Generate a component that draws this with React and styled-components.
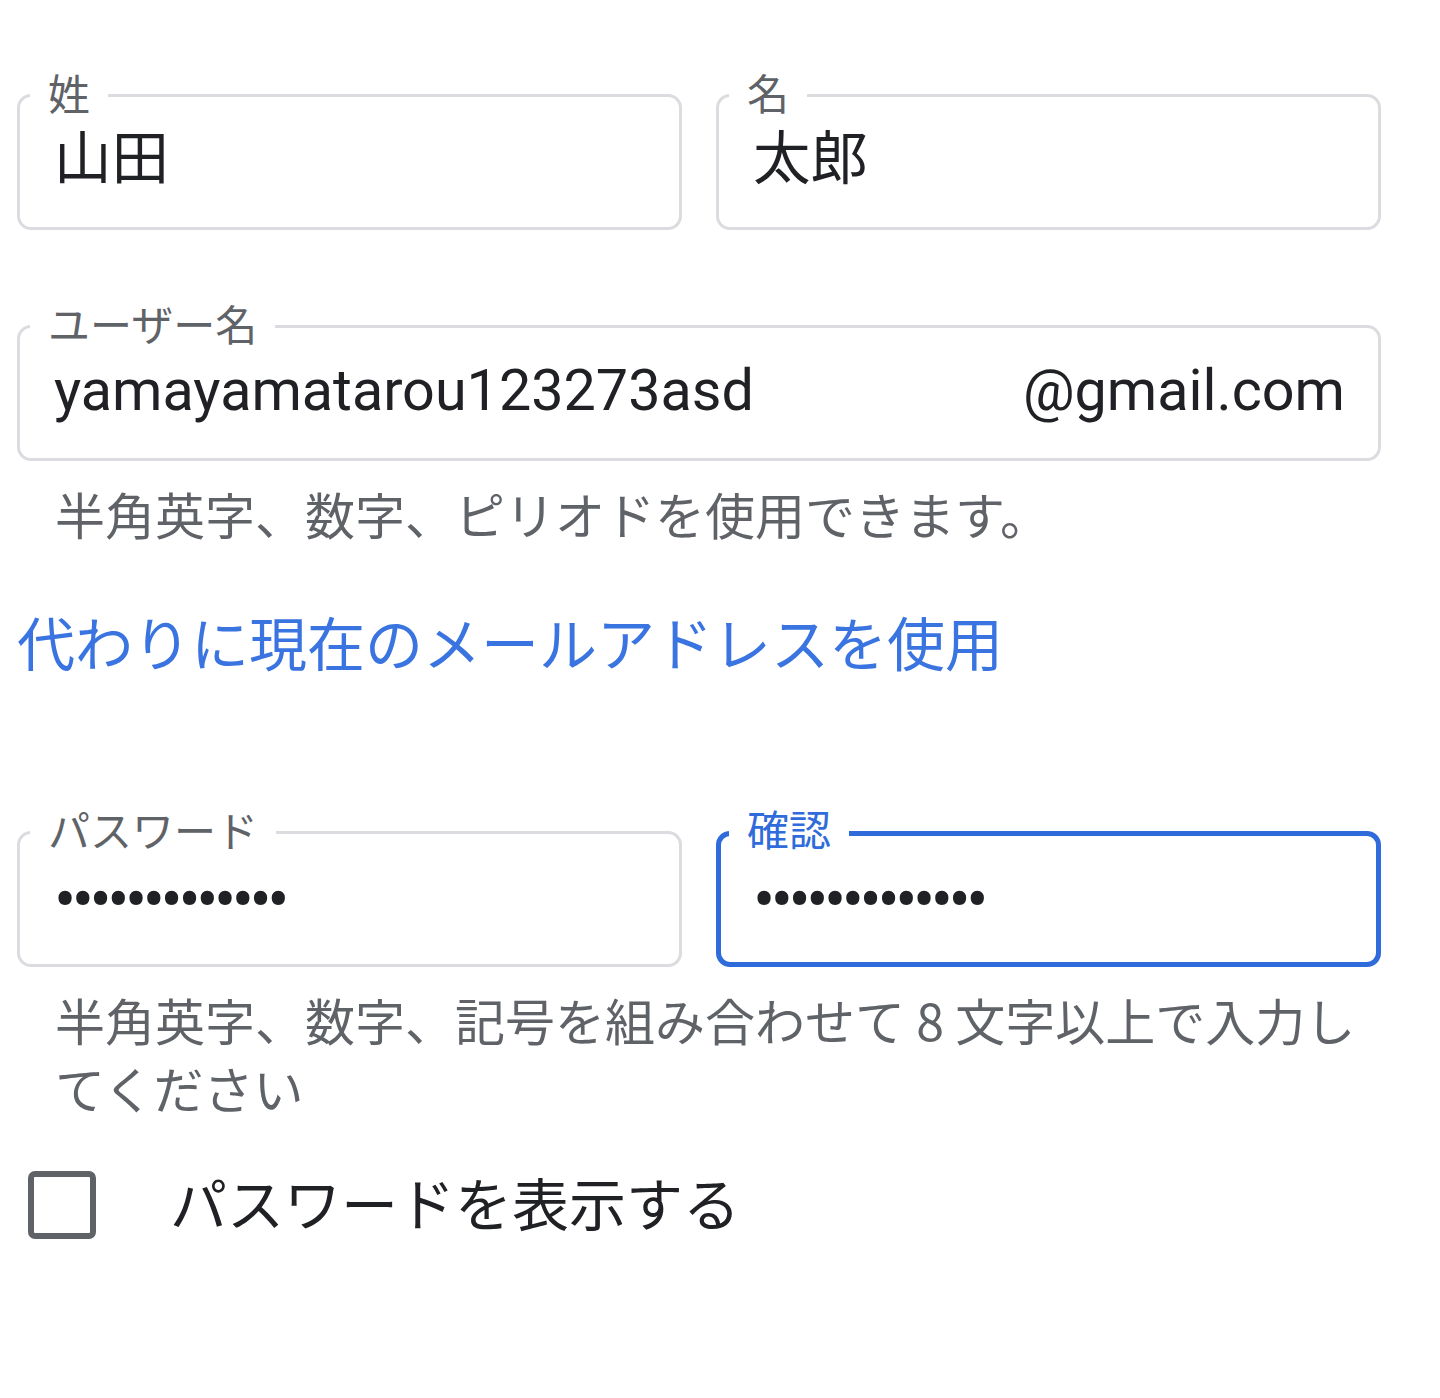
import React from "react";
import styled, { createGlobalStyle } from "styled-components";

const GlobalStyle = createGlobalStyle`
  html, body {
    margin: 0;
    padding: 0;
    background: #ffffff;
  }
  body {
    font-family: Roboto, "Noto Sans CJK JP", "Noto Sans", sans-serif;
    color: #202124;
  }
`;

const Page = styled.div`
  width: 1440px;
  height: 1398px;
  box-sizing: border-box;
  padding: 94px 59px 0 17px;
  display: flex;
  flex-direction: column;
`;

const Row = styled.div`
  display: grid;
  grid-template-columns: 1fr 1fr;
  gap: 34px;
  margin-top: ${({ top }) => top || 0}px;
`;

const Field = styled.div`
  position: relative;
  height: 136px;
  box-sizing: border-box;
  border: ${({ focused }) => (focused ? "5px solid #2f6bdb" : "3px solid #dadce0")};
  border-radius: 14px;
  padding: 0 ${({ focused }) => (focused ? 31 : 33)}px 4px
    ${({ focused }) => (focused ? 32 : 34)}px;
  display: flex;
  align-items: center;
  justify-content: space-between;
  margin-top: ${({ top }) => top || 0}px;
`;

const Label = styled.span`
  position: absolute;
  left: ${({ focused }) => (focused ? 8 : 10)}px;
  top: ${({ focused }) => (focused ? -30 : -27)}px;
  padding: 0 18px;
  background: #ffffff;
  font-family: "Noto Sans CJK JP", sans-serif;
  font-size: 42px;
  line-height: 44px;
  color: ${({ focused }) => (focused ? "#2f6bdb" : "#5f6368")};
`;

const Value = styled.span`
  font-family: Roboto, "Noto Sans CJK JP", sans-serif;
  font-size: 57.5px;
  line-height: 64px;
  color: #202124;
  white-space: nowrap;
`;

const Dots = styled(Value)`
  font-size: 66px;
  letter-spacing: -4.5px;
  margin-top: 8px;
`;

const Helper = styled.div`
  padding-left: 38px;
  margin-top: 18px;
  font-family: "Noto Sans CJK JP", Roboto, sans-serif;
  font-size: 50px;
  line-height: 68px;
  color: #5f6368;
`;

const Link = styled.a`
  display: block;
  margin-top: 54px;
  font-family: "Noto Sans CJK JP", sans-serif;
  font-size: 58px;
  line-height: 80px;
  color: #3a74e0;
  text-decoration: none;
  cursor: pointer;
  white-space: nowrap;
`;

const CheckRow = styled.label`
  display: flex;
  align-items: center;
  gap: 74px;
  margin-top: 50px;
  padding-left: 11px;
  cursor: pointer;
`;

const Box = styled.span`
  width: 68px;
  height: 68px;
  box-sizing: border-box;
  border: 6px solid #5f6368;
  border-radius: 7px;
  flex: none;
`;

const CheckText = styled.span`
  font-family: "Noto Sans CJK JP", sans-serif;
  font-size: 57px;
  line-height: 68px;
  margin-top: -8px;
  color: #202124;
`;

export default function App() {
  return (
    <>
      <GlobalStyle />
      <Page>
        <Row>
          <Field>
            <Label>姓</Label>
            <Value>山田</Value>
          </Field>
          <Field>
            <Label>名</Label>
            <Value>太郎</Value>
          </Field>
        </Row>

        <Field top={95}>
          <Label>ユーザー名</Label>
          <Value>yamayamatarou123273asd</Value>
          <Value>@gmail.com</Value>
        </Field>
        <Helper>半角英字、数字、ピリオドを使用できます。</Helper>

        <Link>代わりに現在のメールアドレスを使用</Link>

        <Row top={150}>
          <Field>
            <Label>パスワード</Label>
            <Dots>•••••••••••••</Dots>
          </Field>
          <Field focused>
            <Label focused>確認</Label>
            <Dots>•••••••••••••</Dots>
          </Field>
        </Row>
        <Helper>
          半角英字、数字、記号を組み合わせて 8 文字以上で入力してください
        </Helper>

        <CheckRow>
          <Box />
          <CheckText>パスワードを表示する</CheckText>
        </CheckRow>
      </Page>
    </>
  );
}
